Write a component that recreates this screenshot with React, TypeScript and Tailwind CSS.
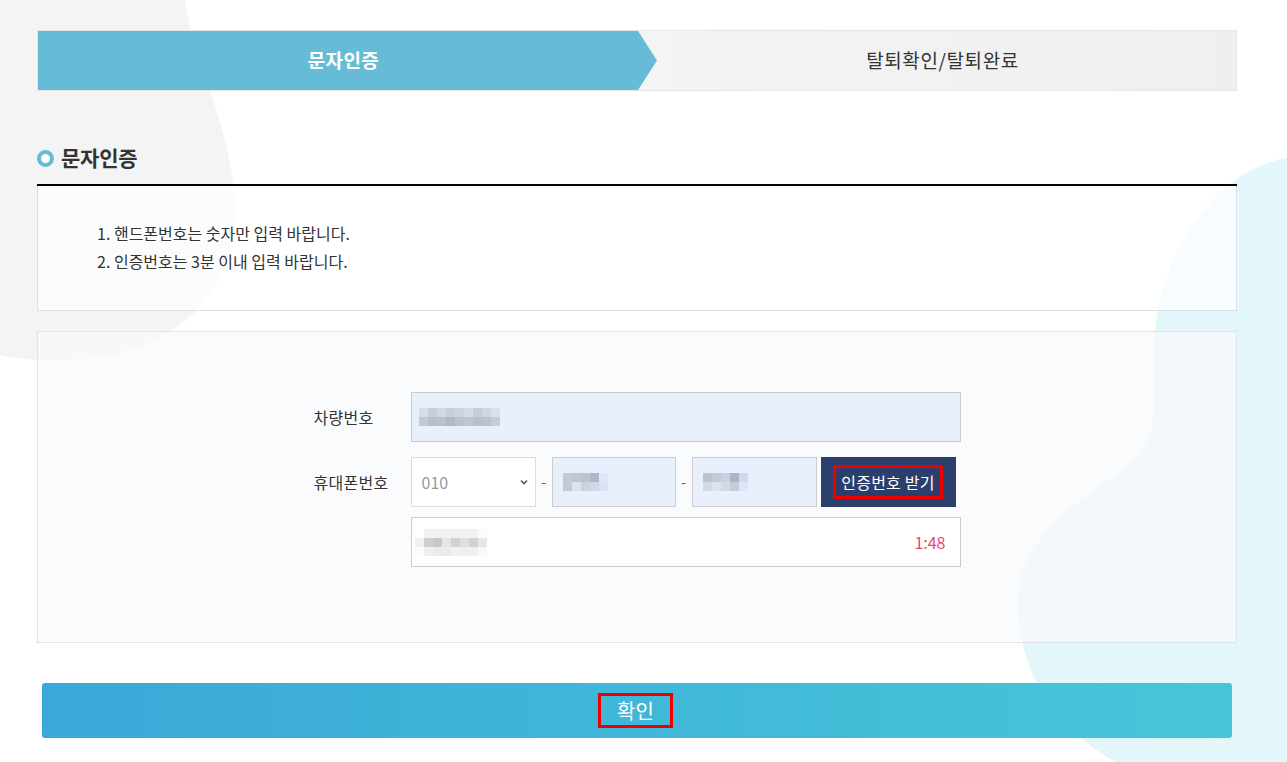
import React from 'react'

const carBlur = [
  ['#d6dcea', '#c5ceda', '#d2d9e6', '#c9cfdc', '#cfd3e2', '#d3dbe6', '#c8ccda', '#d0d5e4', '#d8e0ee'],
  ['#c1c9d6', '#b6c0cc', '#b9c3cc', '#b2b9c2', '#bfc2cd', '#bec5d0', '#b7c1c9', '#bfc0cb', '#c7cdd9'],
]
const phoneBlur1 = [
  ['#c3c9d8', '#c0c6d3', '#c1c3cb', '#b0b5c9', '#dfe7f7'],
  ['#c3c9d7', '#dbe2f0', '#cdd2de', '#d1d7e6', '#dbe3f3'],
]
const phoneBlur2 = [
  ['#bfc3d1', '#c6cad7', '#cbd0dc', '#a9b6c9', '#d0d9e8'],
  ['#d5d9e4', '#dce3f1', '#d3d8e3', '#c2ccdb', '#dde5f5'],
]
const codeBlur = [
  ['#ffffff', '#f1f2f3', '#f0f1f2', '#f1f2f2', '#f2f1f1', '#f1f2f3', '#f0f1f3', '#fafbfc'],
  ['#f6eeeb', '#cdd1d4', '#c6c8cd', '#e3e5e7', '#d8cfce', '#dde1e2', '#d3d1d6', '#e4e6ec'],
  ['#fdfbfa', '#eef0f0', '#ececed', '#eaebeb', '#f0f0f0', '#efefee', '#f0f0ee', '#f8f9fb'],
]

// pixelated (mosaic) placeholder for masked values
const Blur = ({ rows }: { rows: string[][] }) => (
  <div className="flex flex-col">
    {rows.map((r, i) => (
      <div key={i} className="flex">
        {r.map((c, j) => (
          <div key={j} className="w-[9px] h-[9px]" style={{ backgroundColor: c }} />
        ))}
      </div>
    ))}
  </div>
)

const App = () => {
  return (
    <div className="relative w-full h-[762px] overflow-hidden bg-white font-['Noto_Sans_CJK_KR','Noto_Sans',sans-serif] text-[#333]">
      {/* background blobs */}
      <svg className="absolute left-0 top-0 pointer-events-none" width="1287" height="762" viewBox="0 0 1287 762">
        <path d="M0,0 L185,0 C192,60 235,130 235,215 C235,300 165,360 60,360 C30,360 10,358 0,355 Z" fill="#f4f4f4" />
        <path d="M1287,158 C1220,170 1165,240 1155,330 C1148,400 1168,440 1120,472 C1060,512 1015,548 1018,610 C1021,680 1060,730 1115,762 L1287,762 Z" fill="#e3f6fa" />
      </svg>

      <div className="relative w-[1200px] ml-[37px] pt-[30px]">
        {/* steps */}
        <div className="flex h-[61px] border border-[#e6e6e6] bg-gradient-to-r from-[#f9f9f9] to-[#efefef]">
          <div className="w-[619px] h-full bg-[#66bcd6] [clip-path:polygon(0_0,600px_0,100%_50%,600px_100%,0_100%)] flex items-center justify-center pr-[8px] text-white text-[19px] tracking-[0.4px] font-bold">
            문자인증
          </div>
          <div className="flex-1 flex items-center justify-center pr-[8px] text-[19px] tracking-[0.6px] text-[#333]">
            탈퇴확인/탈퇴완료
          </div>
        </div>

        {/* title */}
        <div className="mt-[53px] mb-[12px] flex items-center gap-[7px] h-[28px]">
          <span className="w-[17px] h-[17px] rounded-full border-[4px] border-[#66bcd6] bg-white" />
          <h2 className="text-[21px] font-bold text-[#333] tracking-[-0.2px]">문자인증</h2>
        </div>

        {/* notice */}
        <div className="border-t-2 border-black">
          <div className="h-[125px] border border-t-0 border-[#dcdfe3] bg-white/70 pl-[59px] pt-[33px] text-[16px] leading-[28px] text-[#333]">
            <p>1. 핸드폰번호는 숫자만 입력 바랍니다.</p>
            <p>2. 인증번호는 3분 이내 입력 바랍니다.</p>
          </div>
        </div>

        {/* form */}
        <div className="mt-[20px] h-[312px] border border-[#dce6ea] bg-[#f8fafc]/70 flex justify-center pt-[60px]">
          <div className="w-[647px] flex flex-col">
            <div className="flex items-center">
              <label className="w-[97px] text-[16px] tracking-[0.3px] text-[#333]">차량번호</label>
              <div className="w-[550px] h-[50px] bg-[#e8f0fe] border border-[#cccccc] flex items-center pl-[7px]">
                <Blur rows={carBlur} />
              </div>
            </div>

            <div className="flex items-center mt-[15px]">
              <label className="w-[97px] text-[16px] tracking-[0.3px] text-[#333]">휴대폰번호</label>
              <div className="w-[125px] h-[50px] bg-white border border-[#dddddd] flex items-center justify-between pl-[10px] pr-[5px] text-[16px] text-[#999]">
                <span>010</span>
                <svg width="12" height="12" viewBox="0 0 12 12" fill="none" stroke="#555" strokeWidth="1.6">
                  <path d="M3 4.5 L6 7.5 L9 4.5" />
                </svg>
              </div>
              <span className="w-[16px] text-center text-[#666] text-[15px]">-</span>
              <div className="w-[124px] h-[50px] bg-[#e8f0fe] border border-[#cccccc] flex items-center pl-[10px]">
                <Blur rows={phoneBlur1} />
              </div>
              <span className="w-[16px] text-center text-[#666] text-[15px]">-</span>
              <div className="w-[125px] h-[50px] bg-[#e8f0fe] border border-[#cccccc] flex items-center pl-[10px]">
                <Blur rows={phoneBlur2} />
              </div>
              <button className="ml-[4px] w-[135px] h-[50px] bg-[#2c3e6b] flex items-center justify-center">
                <span className="w-[110px] h-[34px] border-[3px] border-[#ee0000] flex items-center justify-center text-white text-[16px] tracking-[0.2px]">
                  인증번호 받기
                </span>
              </button>
            </div>

            <div className="flex items-center mt-[10px]">
              <div className="w-[97px]" />
              <div className="w-[550px] h-[50px] bg-white border border-[#cccccc] flex items-center justify-between pl-[3px] pr-[14px]">
                <Blur rows={codeBlur} />
                <span className="text-[16px] text-[#e8476a]">1:48</span>
              </div>
            </div>
          </div>
        </div>

        {/* confirm */}
        <div className="px-[5px] mt-[40px]">
          <button className="w-full h-[55px] rounded-[3px] bg-gradient-to-r from-[#3aa8d8] to-[#48c6d8] flex items-center justify-center">
            <span className="w-[75px] h-[35px] border-[3px] border-[#ee0000] flex items-center justify-center text-white text-[20px] -ml-[3px]">
              확인
            </span>
          </button>
        </div>
      </div>
    </div>
  )
}

export default App
